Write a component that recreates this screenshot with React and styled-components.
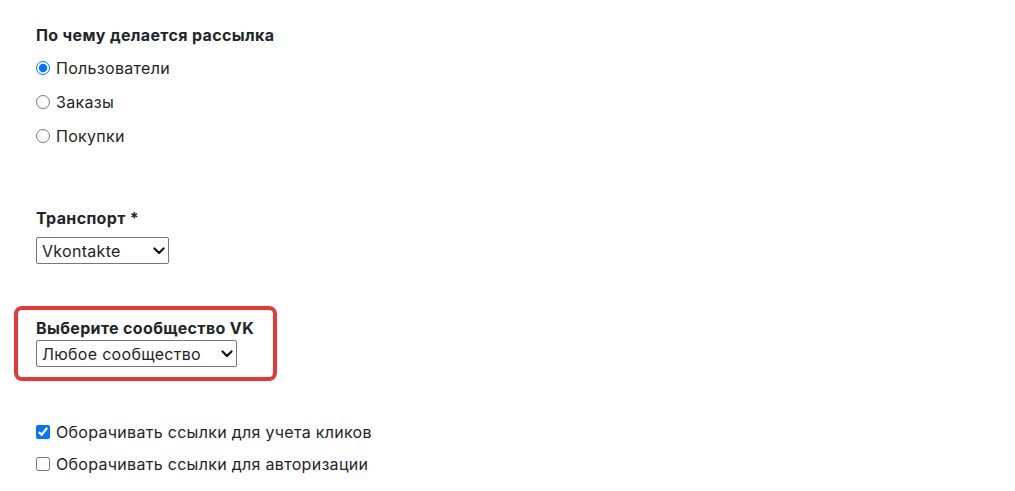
import React, { useState } from "react";
import styled, { createGlobalStyle } from "styled-components";

const GlobalStyle = createGlobalStyle`
  html, body {
    margin: 0;
    background: #ffffff;
  }
  body {
    font-family: "Inter", "Open Sans", sans-serif;
    font-size: 16px;
    color: #212529;
    letter-spacing: 0.3px;
  }
`;

const Page = styled.div`
  padding: 23px 36px 0;
  display: flex;
  flex-direction: column;
`;

const Group = styled.div`
  display: flex;
  flex-direction: column;
  margin-top: ${(p) => p.$top || 0}px;
`;

const Heading = styled.div`
  font-weight: 700;
  line-height: 24px;
  letter-spacing: 0.35px;
`;

const OptionRow = styled.label`
  display: flex;
  align-items: center;
  gap: 6px;
  height: ${(p) => p.$h || 34}px;
  line-height: 24px;
  cursor: pointer;
`;

const Radio = styled.input.attrs({ type: "radio" })`
  width: 14px;
  height: 14px;
  margin: 0;
  accent-color: #0075ff;
`;

const Checkbox = styled.input.attrs({ type: "checkbox" })`
  width: 14px;
  height: 14px;
  margin: 0;
  accent-color: #0075ff;
`;

const SelectWrap = styled.div`
  position: relative;
  width: ${(p) => p.$w}px;
  margin-top: ${(p) => p.$top || 0}px;
`;

const Select = styled.select`
  appearance: none;
  width: 100%;
  height: 27px;
  box-sizing: border-box;
  border: 1px solid #767676;
  border-radius: 2px;
  background: #fff;
  padding: 0 24px 0 5px;
  font-family: inherit;
  font-size: 16px;
  letter-spacing: 0.3px;
  color: #212529;
`;

const Arrow = styled.svg`
  position: absolute;
  right: 4px;
  top: 10px;
  pointer-events: none;
`;

const Chevron = () => (
  <Arrow width="12" height="8" viewBox="0 0 12 8">
    <polyline
      points="1.5,1.5 6,6 10.5,1.5"
      fill="none"
      stroke="#111"
      strokeWidth="2.2"
      strokeLinecap="round"
      strokeLinejoin="round"
    />
  </Arrow>
);

const Highlight = styled.div`
  display: flex;
  flex-direction: column;
  width: 263px;
  box-sizing: border-box;
  margin: 42px 0 0 -22px;
  padding: 6px 0 10px 18px;
  border: 4px solid #e53935;
  border-radius: 8px;
`;

const App = () => {
  const [basis, setBasis] = useState("users");
  const [wrapClicks, setWrapClicks] = useState(true);
  const [wrapAuth, setWrapAuth] = useState(false);

  const options = [
    { id: "users", label: "Пользователи" },
    { id: "orders", label: "Заказы" },
    { id: "purchases", label: "Покупки" },
  ];

  return (
    <>
      <GlobalStyle />
      <Page>
        <Group>
          <Heading>По чему делается рассылка</Heading>
          <Group $top={4}>
            {options.map((o) => (
              <OptionRow key={o.id}>
                <Radio
                  name="basis"
                  checked={basis === o.id}
                  onChange={() => setBasis(o.id)}
                />
                {o.label}
              </OptionRow>
            ))}
          </Group>
        </Group>

        <Group $top={53}>
          <Heading>Транспорт *</Heading>
          <SelectWrap $w={133} $top={7}>
            <Select defaultValue="vk">
              <option value="vk">Vkontakte</option>
              <option value="email">Email</option>
              <option value="sms">SMS</option>
            </Select>
            <Chevron />
          </SelectWrap>
        </Group>

        <Highlight>
          <Heading>Выберите сообщество VK</Heading>
          <SelectWrap $w={201}>
            <Select defaultValue="any">
              <option value="any">Любое сообщество</option>
            </Select>
            <Chevron />
          </SelectWrap>
        </Highlight>

        <Group $top={35}>
          <OptionRow $h={32}>
            <Checkbox
              checked={wrapClicks}
              onChange={(e) => setWrapClicks(e.target.checked)}
            />
            Оборачивать ссылки для учета кликов
          </OptionRow>
          <OptionRow $h={32}>
            <Checkbox
              checked={wrapAuth}
              onChange={(e) => setWrapAuth(e.target.checked)}
            />
            Оборачивать ссылки для авторизации
          </OptionRow>
        </Group>
      </Page>
    </>
  );
};

export default App;
